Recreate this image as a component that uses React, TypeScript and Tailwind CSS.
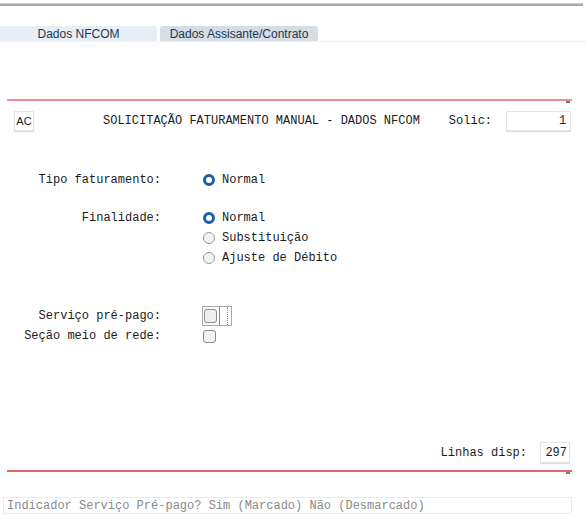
import React from "react";

const mono = "font-['Liberation_Mono','DejaVu_Sans_Mono',monospace]";

function Radio({ checked }: { checked?: boolean }) {
  return checked ? (
    <span className="inline-block w-[12px] h-[12px] rounded-full border-[3px] border-[#1b5eb0] bg-white" />
  ) : (
    <span className="inline-block w-[12px] h-[12px] rounded-full border border-[#9a9a9a] bg-[#f3f3f3]" />
  );
}

function RedLine({ color }: { color: string }) {
  return (
    <div className="relative ml-[7px] w-[565px]">
      <div className={`h-[2px] ${color}`} />
      <div className="absolute right-[2px] top-[2px] w-[4px] h-[2px] bg-[#777]" />
    </div>
  );
}

export default function App() {
  const options = ["Normal", "Substituição", "Ajuste de Débito"];
  return (
    <div className={`w-[586px] h-[517px] bg-white overflow-hidden text-[12px] text-[#1c1c1c] ${mono}`}>
      {/* top border */}
      <div className="mt-[3px] w-[583px] h-[3px] border-t border-[#cfcfcf] bg-[#a9a9a9]" />

      {/* tabs */}
      <div className="mt-[20px] flex h-[16px] border-b border-[#eef2f6] font-['Liberation_Sans',Arial,sans-serif] text-[12px] text-[#1e3553]">
        <div className="w-[157px] bg-[#e7eef5] rounded-tr-[3px] flex items-center justify-center">Dados NFCOM</div>
        <div className="ml-[3px] w-[158px] bg-[#d6dde4] rounded-t-[3px] flex items-center justify-center">Dados Assisante/Contrato</div>
      </div>

      <div className="mt-[57px]">
        <RedLine color="bg-[#ea9196]" />
      </div>

      {/* header */}
      <div className="mt-[10px] flex items-center h-[20px]">
        <div className="ml-[14px] w-[20px] h-[20px] border border-[#e3e3e3] shadow-[0_1px_1px_rgba(0,0,0,0.12)] flex items-center justify-center font-['Liberation_Sans',Arial,sans-serif] text-[11px]">AC</div>
        <div className="ml-[69px] text-[12px]">SOLICITAÇÃO FATURAMENTO MANUAL - DADOS NFCOM</div>
        <div className="ml-[29px]">Solic:</div>
        <div className="ml-[14px] w-[65px] h-[20px] border border-[#e3e3e3] shadow-[0_1px_1px_rgba(0,0,0,0.12)] flex items-center justify-end pr-[4px]">1</div>
      </div>

      {/* tipo faturamento */}
      <div className="mt-[39px] flex items-center h-[20px]">
        <div className="w-[161px] text-right">Tipo faturamento:</div>
        <div className="ml-[42px] flex items-center gap-[7px]">
          <Radio checked />
          <span>Normal</span>
        </div>
      </div>

      {/* finalidade */}
      <div className="mt-[18px] flex">
        <div className="w-[161px] text-right h-[20px] leading-[20px]">Finalidade:</div>
        <div className="ml-[42px] flex flex-col">
          {options.map((o, i) => (
            <div key={o} className="flex items-center gap-[7px] h-[20px]">
              <Radio checked={i === 0} />
              <span>{o}</span>
            </div>
          ))}
        </div>
      </div>

      {/* checkboxes */}
      <div className="mt-[38px] flex items-center h-[20px]">
        <div className="w-[161px] text-right">Serviço pré-pago:</div>
        <div className="ml-[41px] w-[30px] h-[20px] border border-[#a8a8a8] flex items-center">
          <span className="ml-[1px] w-[13px] h-[14px] rounded-[3px] border border-[#8c8c8c] bg-[#efefef]" />
          <span className="ml-[2px] w-[1px] h-[18px] bg-[#8c8c8c]" />
          <span className="ml-[7px] w-[1px] h-[18px] border-l border-dotted border-[#8c8c8c]" />
        </div>
      </div>
      <div className="flex items-center h-[20px]">
        <div className="w-[161px] text-right">Seção meio de rede:</div>
        <div className="ml-[42px] w-[13px] h-[13px] rounded-[3px] border border-[#8c8c8c] bg-[#f3f3f3]" />
      </div>

      {/* linhas */}
      <div className="mt-[96px] flex items-center justify-end h-[21px] pr-[16px]">
        <span>Linhas disp:</span>
        <div className="ml-[13px] w-[30px] h-[21px] border border-[#e3e3e3] shadow-[0_1px_1px_rgba(0,0,0,0.12)] flex items-center justify-end pr-[2px]">297</div>
      </div>

      <div className="mt-[7px]">
        <RedLine color="bg-[#e2666c]" />
      </div>

      {/* bottom message */}
      <div className="mt-[25px] ml-[3px] w-[569px] h-[17px] border border-[#ececec] flex items-center pl-[3px] text-[#8a8a8a] text-[12px]">
        Indicador Serviço Pré-pago? Sim (Marcado) Não (Desmarcado)
      </div>
    </div>
  );
}
